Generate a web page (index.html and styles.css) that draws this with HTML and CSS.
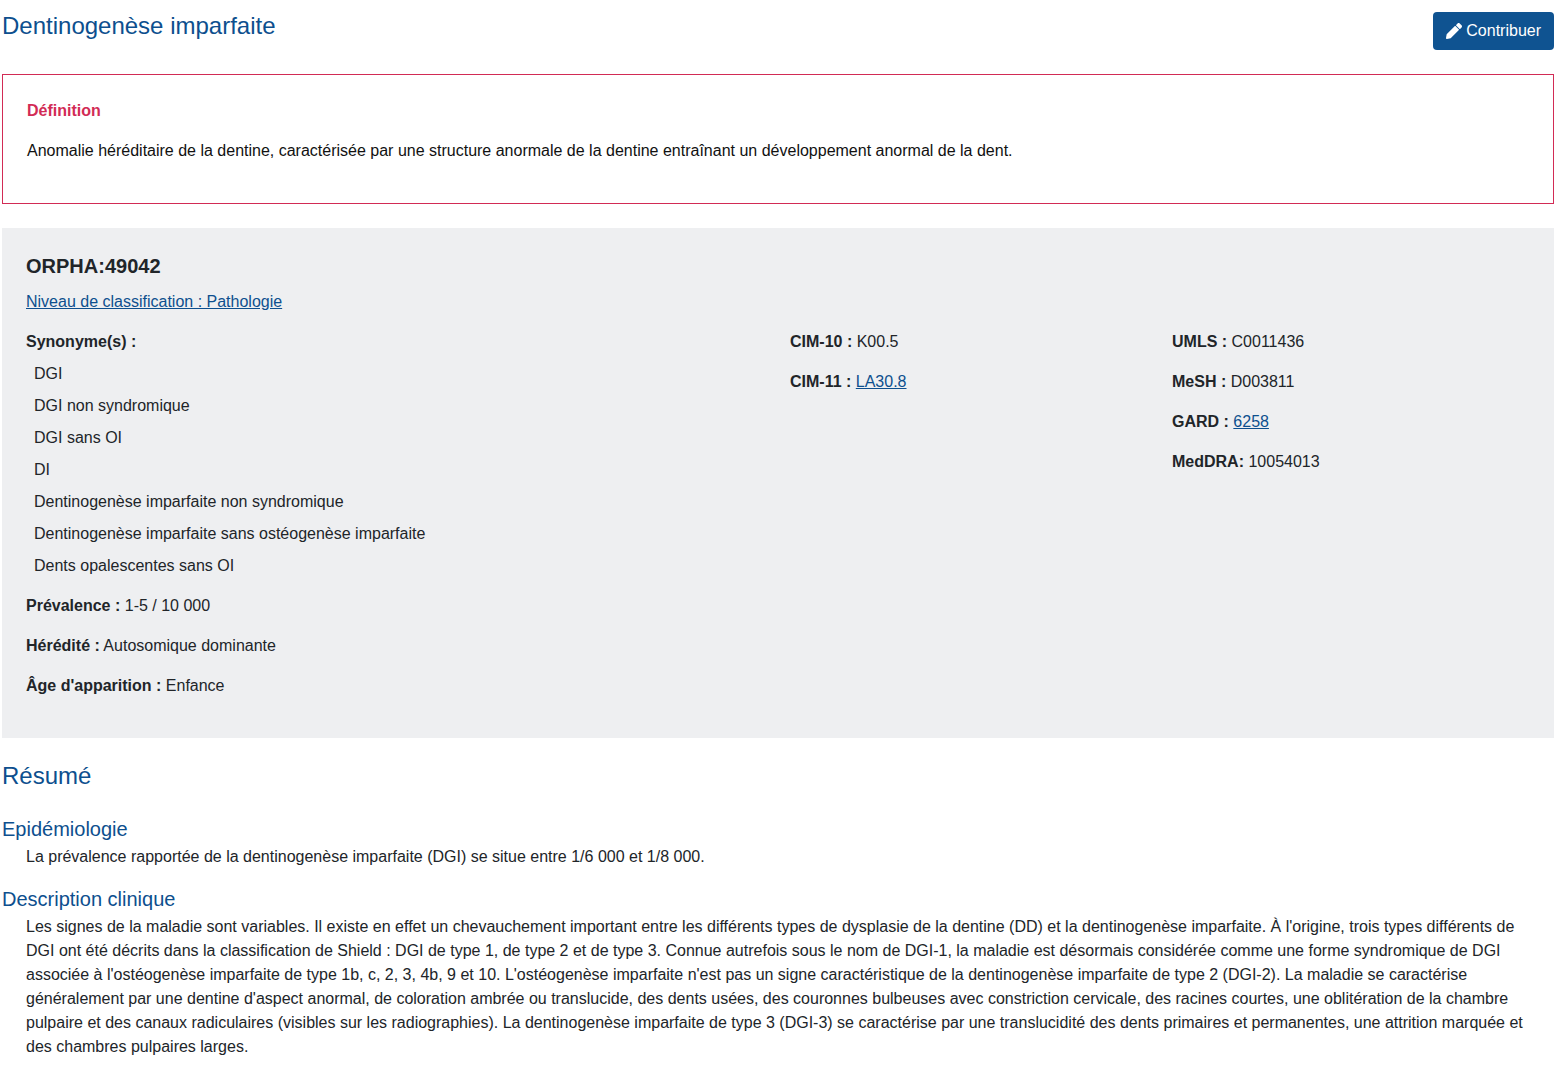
FILE: index.html
```html
<!DOCTYPE html>
<html lang="fr">
<head>
<meta charset="utf-8">
<title>Dentinogenèse imparfaite</title>
<link rel="stylesheet" href="styles.css">
</head>
<body>
<main class="page">
  <header class="top">
    <h1 class="title">Dentinogenèse imparfaite</h1>
    <a class="btn" href="#">
      <svg class="icon" viewBox="0 0 512 512" aria-hidden="true"><path fill="currentColor" d="M497.9 142.1l-46.1 46.1c-4.7 4.7-12.3 4.7-17 0l-111-111c-4.7-4.7-4.7-12.3 0-17l46.1-46.1c18.700-18.700 49.100-18.700 67.900 0l60.100 60.100c18.800 18.700 18.800 49.100 0 67.900zM284.200 99.800L21.600 362.400.4 483.900c-2.900 16.400 11.400 30.600 27.800 27.800l121.500-21.300 262.600-262.600c4.700-4.700 4.700-12.300 0-17l-111-111c-4.800-4.700-12.400-4.700-17.100 0z"/></svg>
      <span>Contribuer</span>
    </a>
  </header>

  <section class="definition">
    <h2 class="definition-title">Définition</h2>
    <p class="definition-text">Anomalie héréditaire de la dentine, caractérisée par une structure anormale de la dentine entraînant un développement anormal de la dent.</p>
  </section>

  <section class="panel">
    <h3 class="orpha">ORPHA:49042</h3>
    <p class="level"><a href="#">Niveau de classification : Pathologie</a></p>
    <div class="grid">
      <div>
        <p class="item"><b>Synonyme(s) :</b></p>
        <ul class="synonyms">
          <li>DGI</li>
          <li>DGI non syndromique</li>
          <li>DGI sans OI</li>
          <li>DI</li>
          <li>Dentinogenèse imparfaite non syndromique</li>
          <li>Dentinogenèse imparfaite sans ostéogenèse imparfaite</li>
          <li>Dents opalescentes sans OI</li>
        </ul>
        <p class="item"><b>Prévalence :</b> 1-5 / 10 000</p>
        <p class="item"><b>Hérédité :</b> Autosomique dominante</p>
        <p class="item"><b>Âge d'apparition :</b> Enfance</p>
      </div>
      <div>
        <p class="item"><b>CIM-10 :</b> K00.5</p>
        <p class="item"><b>CIM-11 :</b> <a href="#">LA30.8</a></p>
      </div>
      <div>
        <p class="item"><b>UMLS :</b> C0011436</p>
        <p class="item"><b>MeSH :</b> D003811</p>
        <p class="item"><b>GARD :</b> <a href="#">6258</a></p>
        <p class="item"><b>MedDRA:</b> 10054013</p>
      </div>
    </div>
  </section>

  <h2 class="summary-title">Résumé</h2>
  <h3 class="sub">Epidémiologie</h3>
  <p class="body-text">La prévalence rapportée de la dentinogenèse imparfaite (DGI) se situe entre 1/6 000 et 1/8 000.</p>
  <h3 class="sub">Description clinique</h3>
  <p class="body-text">Les signes de la maladie sont variables. Il existe en effet un chevauchement important entre les différents types de dysplasie de la dentine (DD) et la dentinogenèse imparfaite. À l'origine, trois types différents de DGI ont été décrits dans la classification de Shield : DGI de type 1, de type 2 et de type 3. Connue autrefois sous le nom de DGI-1, la maladie est désormais considérée comme une forme syndromique de DGI associée à l'ostéogenèse imparfaite de type 1b, c, 2, 3, 4b, 9 et 10. L'ostéogenèse imparfaite n'est pas un signe caractéristique de la dentinogenèse imparfaite de type 2 (DGI-2). La maladie se caractérise généralement par une dentine d'aspect anormal, de coloration ambrée ou translucide, des dents usées, des couronnes bulbeuses avec constriction cervicale, des racines courtes, une oblitération de la chambre pulpaire et des canaux radiculaires (visibles sur les radiographies). La dentinogenèse imparfaite de type 3 (DGI-3) se caractérise par une translucidité des dents primaires et permanentes, une attrition marquée et des chambres pulpaires larges.</p>
</main>
</body>
</html>
```

FILE: styles.css
```css
* { box-sizing: border-box; }
html, body { margin: 0; padding: 0; background: #fff; }
body {
  font-family: "Liberation Sans", Arial, sans-serif;
  font-size: 16px;
  line-height: 24px;
  color: #212529;
  overflow: hidden;
  height: 1078px;
}
a { color: #0d4f8e; text-decoration: underline; }
p { margin: 0; }
.page { padding: 0 12px 0 2px; }
.top { display: flex; justify-content: space-between; align-items: flex-start; padding-top: 12px; height: 74px; }
.title { margin: 0; font-size: 24px; line-height: 28px; font-weight: 400; color: #0d4f8e; }
.btn {
  display: flex; align-items: center; gap: 4px;
  background: #0f5391; color: #fff; text-decoration: none;
  height: 38px; padding: 0 13px; border-radius: 4px;
}
.icon { width: 16px; height: 16px; }
.definition { border: 1px solid #d22b55; height: 130px; padding: 24px; margin-bottom: 24px; }
.definition-title { margin: 0 0 16px; font-size: 16px; line-height: 24px; font-weight: 700; color: #d22b55; }
.definition-text { color: #111; }
.panel { background: #eeeff1; height: 510px; padding: 24px 0 24px 24px; }
.orpha { margin: 0 0 10px; font-size: 20px; line-height: 28px; font-weight: 700; }
.level { margin-bottom: 16px; }
.grid { display: grid; grid-template-columns: 2fr 1fr 1fr; }
.item { margin-bottom: 16px; }
.synonyms { list-style: none; margin: -12px 0 12px; padding: 0 0 0 8px; }
.synonyms li { height: 32px; padding-top: 4px; }
.summary-title { margin: 24px 0 27px; font-size: 24px; line-height: 28px; font-weight: 400; color: #0d4f8e; }
.sub { margin: 18px 0 4px; font-size: 20px; line-height: 24px; font-weight: 400; color: #0d4f8e; }
.body-text { padding: 0 24px; }
```
